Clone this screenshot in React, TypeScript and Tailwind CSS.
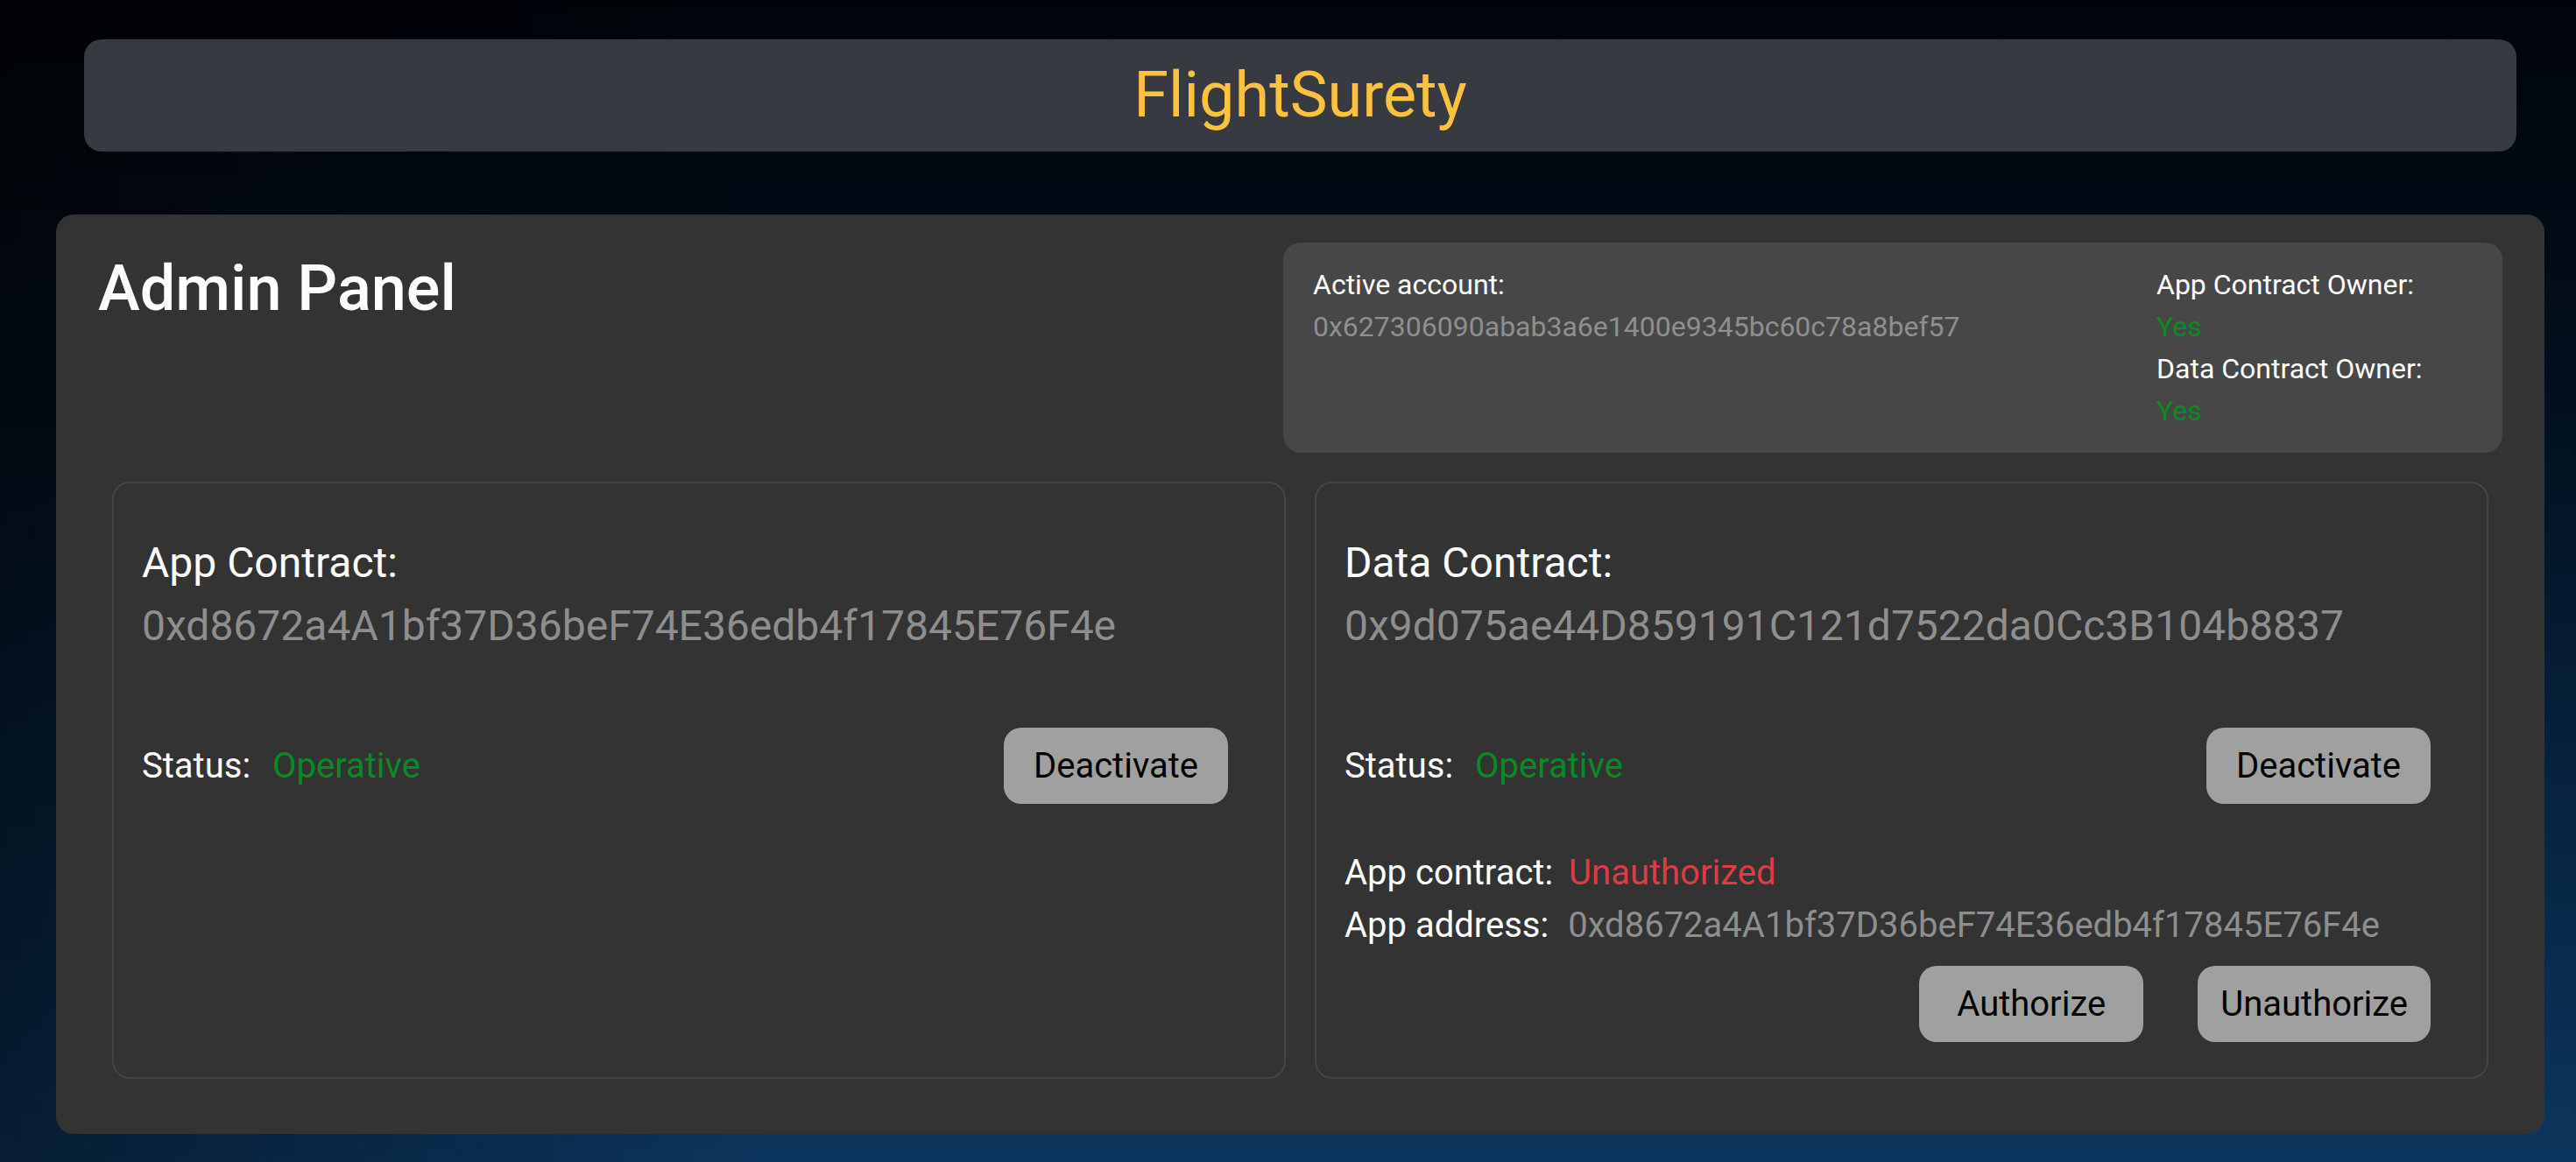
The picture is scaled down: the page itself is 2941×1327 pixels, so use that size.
import React from 'react'

// Admin dashboard for the FlightSurety dapp

const APP_ADDRESS = '0xd8672a4A1bf37D36beF74E36edb4f17845E76F4e'
const DATA_ADDRESS = '0x9d075ae44D859191C121d7522da0Cc3B104b8837'
const ACTIVE_ACCOUNT = '0x627306090abab3a6e1400e9345bc60c78a8bef57'

function Button({ children }: { children: React.ReactNode }) {
  return (
    <button className="h-[87px] min-w-[256px] rounded-[20px] bg-[#a0a0a0] px-[26px] text-[40px] leading-[47px] text-black">
      {children}
    </button>
  )
}

function StatusRow() {
  return (
    <div className="mt-[80px] flex items-center justify-between pr-[32px]">
      <div className="text-[40px] leading-[60px]">
        <span className="text-white">Status:</span>
        <span className="ml-[25px] text-[#0a8a25]">Operative</span>
      </div>
      <Button>Deactivate</Button>
    </div>
  )
}

function ContractCard({
  title,
  address,
  children,
}: {
  title: string
  address: string
  children?: React.ReactNode
}) {
  return (
    <div className="flex-1 rounded-[20px] border-2 border-[#454545] pt-[55px] pb-[40px] pl-[32px] pr-[32px]">
      <p className="text-[48px] leading-[72px] text-white">{title}</p>
      <p className="text-[48px] leading-[72px] text-[#8e8e8e]">{address}</p>
      <StatusRow />
      {children}
    </div>
  )
}

export default function App() {
  return (
    <div className="min-h-screen w-full bg-[linear-gradient(90deg,rgba(0,0,0,0.45)_0%,rgba(0,0,0,0)_30%),linear-gradient(180deg,#00040a_0%,#02101e_35%,#082746_75%,#0c355d_100%)] pt-[45px] pb-[30px] font-['Roboto',sans-serif]">
      <div className="ml-[64px] mr-[36px]">
        <header className="mx-[32px] flex h-[128px] items-center justify-center rounded-[20px] bg-[#373a41]">
          <h1 className="text-[72px] leading-[84px] text-[#fcc13e]">FlightSurety</h1>
        </header>

        <main className="mt-[72px] rounded-[20px] bg-[#333333] pt-[32px] pb-[63px]">
          {/* Title + account info */}
          <div className="flex justify-between px-[48px]">
            <h2 className="mt-[11px] text-[72px] leading-[84px] font-medium text-white">
              Admin Panel
            </h2>
            <div className="flex w-[1392px] rounded-[20px] bg-[#484748] px-[34px] py-[24px] text-[32px] leading-[48px]">
              <div className="flex-1">
                <p className="text-white">Active account:</p>
                <p className="text-[#8f8f8f]">{ACTIVE_ACCOUNT}</p>
              </div>
              <div className="w-[361px]">
                <p className="text-white">App Contract Owner:</p>
                <p className="text-[#0a8a25]">Yes</p>
                <p className="text-white">Data Contract Owner:</p>
                <p className="text-[#0a8a25]">Yes</p>
              </div>
            </div>
          </div>

          {/* Contracts */}
          <div className="mt-[33px] flex gap-[33px] px-[64px]">
            <ContractCard title="App Contract:" address={APP_ADDRESS} />
            <ContractCard title="Data Contract:" address={DATA_ADDRESS}>
              <div className="mt-[49px] text-[40px] leading-[60px]">
                <p>
                  <span className="text-white">App contract:</span>
                  <span className="ml-[18px] text-[#dc3c46]">Unauthorized</span>
                </p>
                <p>
                  <span className="text-white">App address:</span>
                  <span className="ml-[22px] text-[#8e8e8e]">{APP_ADDRESS}</span>
                </p>
              </div>
              <div className="mt-[16px] flex justify-end gap-[62px] pr-[32px]">
                <Button>Authorize</Button>
                <Button>Unauthorize</Button>
              </div>
            </ContractCard>
          </div>
        </main>
      </div>
    </div>
  )
}
